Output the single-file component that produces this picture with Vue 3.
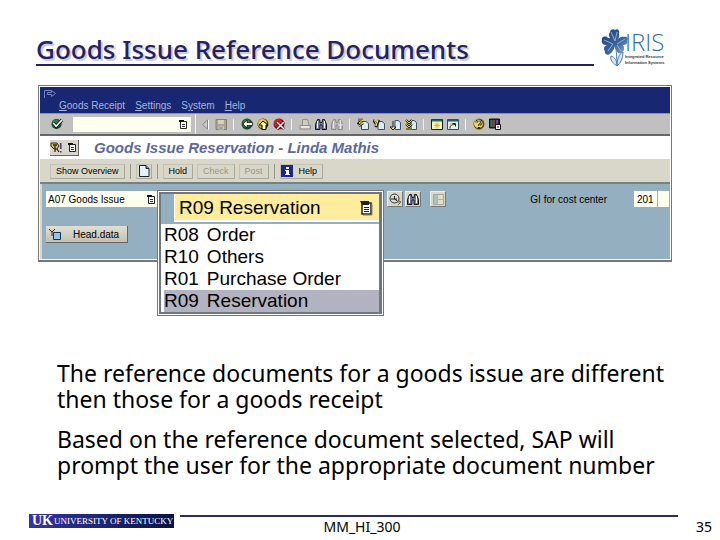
<script setup>
import { ref } from 'vue'

const command = ref('')
const action = ref('A07 Goods Issue')
const movement = ref('201')
const selected = ref('R09')
const options = [
  { code: 'R08', name: 'Order' },
  { code: 'R10', name: 'Others' },
  { code: 'R01', name: 'Purchase Order' },
  { code: 'R09', name: 'Reservation' },
]
const menus = [
  ['', 'G', 'oods Receipt'],
  ['', 'S', 'ettings'],
  ['S', 'y', 'stem'],
  ['', 'H', 'elp'],
]
const toolGroups = [
  ['previous', 'save'],
  ['back', 'exit', 'cancel'],
  ['print', 'find', 'findnext'],
  ['first', 'pageup', 'pagedown', 'last'],
  ['session', 'shortcut'],
  ['question', 'layout'],
]
const icons = {
  check: '<circle cx="6" cy="6.5" r="5.500" fill="#174b2b"/><circle cx="5.5" cy="6" r="4" fill="#2e8050"/><path d="M2.5 5.5l3 3.5L12 2" fill="none" stroke="#000" stroke-width="3.4"/><path d="M2.5 5.5l3 3.5L12 2" fill="none" stroke="#fff" stroke-width="1.8"/>',
  previous: '<path d="M8.5 2L3.500 6.500L8.500 11Z" fill="#ccc" stroke="#858585"/><path d="M9.500 2v9.500" stroke="#fff"/>',
  save: '<path d="M1 1.500h10.500v10H1Z" fill="#aaa492" stroke="#85806f"/><path d="M3 2h6v4H3ZM3.500 8.500h5.500v3H3.500Z" fill="#d6d1bd"/><path d="M4 10h4" stroke="#777"/>',
  back: '<circle cx="6" cy="6" r="5.500" fill="#164628"/><circle cx="5.500" cy="5.500" r="4" fill="#397b38"/><path d="M2 6l4-4v2.500h5.500v3H6V10Z" fill="#fff" stroke="#000" stroke-width=".7"/>',
  exit: '<circle cx="6" cy="6" r="5.500" fill="#594000"/><circle cx="5.500" cy="5.500" r="4.500" fill="#f0c42b"/><path d="M2 7l4-4 5 4H9v4.500H5V7Z" fill="#fffbd0" stroke="#000"/>',
  cancel: '<circle cx="6" cy="6" r="5.500" fill="#7f1018"/><circle cx="5" cy="5" r="4" fill="#ce2028"/><path d="M4 4l7 7M11 4l-7 7" stroke="#300" stroke-width="2.500"/><path d="M4 4l7 7M11 4l-7 7" stroke="#fff" stroke-width="1.500"/>',
  print: '<path d="M3.500 7V1.500H8.500L10 7M1 7.500h10.500V11H1Z" fill="#cfccc4" stroke="#918f88"/><path d="M2 9h8" stroke="#fff"/>',
  find: '<path d="M2.500 1.500h2l.5 3h2l.5-3h2l2 5V11.500H7V7H5v4.500H.500V6.500Z" fill="#74799a" stroke="#111425"/><path d="M2.500 3v7M9.500 3v7" stroke="#fff"/>',
  findnext: '<path d="M2.500 1.500h2l.5 3h2l.5-3h2l2 5V11.500H7V7H5v4.500H.500V6.500Z" fill="#bbb" stroke="#8c8c8c"/><path d="M2.500 3v7M9.500 2v9M7 7h5" stroke="#e4e4e4"/>',
  first: '<path d="M4.500 3.500H9l2.500 2v6h-7Z" fill="#dceaf2" stroke="#3c5364"/><path d="M1 2h5M6 2L2 5h4M6 5L2 8" stroke="#222" stroke-width="2.500" fill="none"/><path d="M1 2h5L2 5h4L2 8" stroke="#f3dc45" fill="none"/>',
  pageup: '<path d="M5 3.500h4l2.500 2v6H5Z" fill="#dceaf2" stroke="#3c5364"/><path d="M0 2l3 4v3l3-7" stroke="#222" stroke-width="2.500" fill="none"/><path d="M1 2l2 3v3l2-6" stroke="#f3dc45" fill="none"/>',
  pagedown: '<path d="M6 2.500h3l2.500 2v7H6Z" fill="#dceaf2" stroke="#3c5364"/><path d="M4 3v6H1l3 3 3-3H5" stroke="#222" fill="#f3dc45"/>',
  last: '<path d="M6 2.500h3l2.500 2v7H6Z" fill="#dceaf2" stroke="#3c5364"/><path d="M1 2l3 3 3-3M1 6l3 3 3-3M1 11h6" stroke="#222" stroke-width="2.200" fill="none"/><path d="M1 2l3 3 3-3M1 6l3 3 3-3M1 11h6" stroke="#f3dc45" stroke-width=".9" fill="none"/>',
  session: '<path d="M.500 1.500h11v10H.500Z" fill="#f7f4bd" stroke="#101b28"/><path d="M1 2.500h10" stroke="#22677b" stroke-width="2"/><path d="M6 4.500v6M3 7.500h6M4 5.500l4 4M8 5.500l-4 4" stroke="#d3bd23"/>',
  shortcut: '<path d="M.500 1.500h11v10H.500Z" fill="#e3eff0" stroke="#335063"/><path d="M1 2.500h10" stroke="#235a72" stroke-width="2"/><path d="M3 10.500c0-3 1-4 5-4M5.500 5.500h3v3" stroke="#222" fill="none"/><path d="M3 6h2" stroke="#e2c634" stroke-width="2"/>',
  question: '<circle cx="6" cy="6" r="5.500" fill="#65500a"/><circle cx="5.500" cy="5.500" r="4.500" fill="#efd34a"/><path d="M3.500 4.500c0-3 5-3 5 0 0 2-2.500 1.500-2.500 3.500M6 9v1.500" stroke="#111" stroke-width="2.200" fill="none"/><path d="M3.500 4.500c0-3 5-3 5 0 0 2-2.500 1.500-2.500 3.500" stroke="#fff" stroke-width=".8" fill="none"/>',
  layout: '<path d="M.500 1h10v9H.500Z" fill="#242044" stroke="#111"/><path d="M1.500 2h2v7h-2z" fill="#28864c"/><path d="M4 2h2v7H4z" fill="#a8342e"/><path d="M7 2h2v4H7z" fill="#4c52a5"/><path d="M6.500 6.500h5v5h-5Z" fill="#fff" stroke="#111"/><path d="M8 9h2" stroke="#111"/>',
  list: '<path d="M3.500 3.500h6v7h-6Z" fill="#fff" stroke="#222"/><path d="M2 2h5v2H2z" fill="#111"/><path d="M5 6.500h3M5 8.500h3" stroke="#333"/>',
  page: '<path d="M1.500.500H8L11 3.500v8H1.500Z" fill="#e3f2fa" stroke="#17252d"/><path d="M8 .500v3h3" fill="#75909c" stroke="#17252d"/>',
  info: '<path d="M0 0h12v12H0Z" fill="#1c2594"/><path d="M5 2h3v2H5zM4 5h4v4h1v1H4V9h1V6H4z" fill="#fff"/>',
  services: '<path d="M1 2h6l2 3-2 3H4L1 5Z" fill="#d5c35a" stroke="#29291d"/><path d="M3 4h4M5 5v6M7 8l2 3" stroke="#222" stroke-width="1.300"/><path d="M10 2h1.500v6H10zM10 10h1.500v1.500H10z" fill="#34407c"/>',
  clock: '<circle cx="5.500" cy="5.500" r="4.500" fill="#dedccc" stroke="#333"/><path d="M2 6h6M5.500 3v3l3 2" stroke="#222" fill="none"/><path d="M8 9h3M9 7l3 2-3 3" stroke="#50723f" fill="none"/>',
  panel: '<path d="M1.500 1.500h10v10h-10Z" fill="#e1ded0" stroke="#aaa799"/><path d="M2 2h3v9H2z" fill="#a8c2bc"/><path d="M5.500 2v9M5.500 6.500h6" stroke="#b6b1a2"/>',
  header: '<path d="M4.500 4.500h7v7h-7Z" fill="#8ec6ec" stroke="#14344f"/><path d="M0 1l3 3 3-3M3 4v4" stroke="#222" fill="none"/><path d="M2 2h2" stroke="#e8d96a"/>',
}
</script>

<template>
  <main class="slide">
    <header class="slide-header">
      <h1>Goods Issue Reference Documents</h1>
      <div class="iris">
        <svg class="flower" viewBox="0 0 28 40" aria-hidden="true">
          <defs>
            <linearGradient id="petal" x1="0" y1="0" x2="1" y2="1">
              <stop offset="0" stop-color="#173f7c" /><stop offset=".6" stop-color="#3c659d" /><stop offset="1" stop-color="#92b5d7" />
            </linearGradient>
          </defs>
          <path d="M13 14C8 11 7 6 9 4c0-2 3-4 5-2 3-2 5 1 4 4 1 2-1 6-3 8 2-4 5-6 8-5 3-1 5 2 3 4 1 3-1 4-4 4 2 3 1 6-1 7-1 3-5 1-5-1-2-1-2-3-2-5-1 4-3 6-5 8-2 2-6 0-5-3-2-2-1-5 2-6-4 0-6-2-5-5-1-3 4-5 6-2 3 0 5 2 6 4Z" fill="url(#petal)" />
          <path d="M10 4l4 9 2-9M3 12l9 4-5 7M16 16l8-5M16 17l4 6" fill="none" stroke="#a9c2de" stroke-width=".8" />
          <path d="M15 17c0 7 1 13 1 19M16 38c-5-3-7-7-6-10 4 1 6 5 6 10 0-7 2-12 6-14 0 6-2 11-6 14" fill="#dae6f3" stroke="#547caf" stroke-width="1" />
        </svg>
        <div class="iris-copy"><strong>IRIS</strong><span>Integrated Resource</span><span>Information Systems</span></div>
      </div>
    </header>

    <section class="screen">
      <div class="sap">
        <nav class="menubar">
          <svg class="exit-mark" viewBox="0 0 12 8" aria-hidden="true"><path d="M.500 8V.500H7M3.500 2.500h4v-2l4 3-4 3v-2h-4Z" fill="none" stroke="#7385c4" /></svg>
          <div class="menus"><a v-for="m in menus" :key="m[2]" href="#">{{ m[0] }}<u>{{ m[1] }}</u>{{ m[2] }}</a></div>
        </nav>
        <div class="toolbar">
          <button class="tool enter" aria-label="Enter"><svg viewBox="0 0 13 13" v-html="icons.check" /></button>
          <label class="command"><input v-model="command" aria-label="Command"><svg class="icon" viewBox="0 0 12 12" v-html="icons.list" /></label>
          <div v-for="(group, i) in toolGroups" :key="i" class="group">
            <button v-for="name in group" :key="name" class="tool" :aria-label="name"><svg viewBox="0 0 12 12" v-html="icons[name]" /></button>
          </div>
        </div>
        <div class="titlebar">
          <button class="services" aria-label="Services"><svg class="icon" viewBox="0 0 12 12" v-html="icons.services" /><svg class="icon" viewBox="0 0 12 12" v-html="icons.list" /></button>
          <h2>Goods Issue Reservation - Linda Mathis</h2>
        </div>
        <div class="actions">
          <button>Show Overview</button>
          <i></i>
          <button class="new" aria-label="New"><svg class="icon" viewBox="0 0 12 12" v-html="icons.page" /></button>
          <i></i>
          <button>Hold</button>
          <button disabled>Check</button>
          <button disabled>Post</button>
          <i></i>
          <button class="help"><svg class="icon" viewBox="0 0 12 12" v-html="icons.info" />Help</button>
        </div>
        <div class="work">
          <div class="fields">
            <label class="action-field"><input v-model="action" aria-label="Action"><svg class="icon" viewBox="0 0 12 12" v-html="icons.list" /></label>
            <div class="small-buttons">
              <button aria-label="Execute"><svg viewBox="0 0 12 12" v-html="icons.clock" /></button>
              <button aria-label="Find"><svg viewBox="0 0 12 12" v-html="icons.find" /></button>
              <button class="apart" aria-label="Overview"><svg viewBox="0 0 12 12" v-html="icons.panel" /></button>
            </div>
            <div class="movement"><label for="movement">GI for cost center</label><input id="movement" v-model="movement"><input class="stock" aria-label="Special stock"></div>
          </div>
          <button class="head-data"><svg class="icon" viewBox="0 0 12 12" v-html="icons.header" /><span>Head.data</span></button>
        </div>
      </div>

      <div class="popup">
        <div class="popup-inner">
          <button class="current"><span>R09 Reservation</span><svg viewBox="0 0 14 16" aria-hidden="true"><path d="M3 3h9v11H3Z" fill="#fff" stroke="#222" stroke-width="1.500" /><path d="M1 1h9v4H3Z" fill="#222" /><path d="M5 7.500h5M5 9.500h5M5 11.500h5" stroke="#222" /><path d="M13 4v11H4" fill="none" stroke="#858058" /></svg></button>
          <div class="options" role="listbox" aria-label="Reference document">
            <button v-for="o in options" :key="o.code" role="option" :aria-selected="selected === o.code" :class="{ chosen: selected === o.code }" @click="selected = o.code"><span>{{ o.code }}</span><span>{{ o.name }}</span></button>
          </div>
        </div>
      </div>
    </section>

    <section class="notes">
      <p>The reference documents for a goods issue are different then those for a goods receipt</p>
      <p>Based on the reference document selected, SAP will prompt the user for the appropriate document number</p>
    </section>

    <footer>
      <div class="brand-row">
        <div class="uk"><strong>UK</strong><span>UNIVERSITY OF KENTUCKY</span></div>
        <div class="foot-rule"></div>
      </div>
      <div class="foot-text"><span></span><span class="course">MM_HI_300</span><span class="number">35</span></div>
    </footer>
  </main>
</template>

<style>
body { margin: 0; background: #fff; }
</style>

<style scoped>
* { box-sizing: border-box; }
button, input { font: inherit; color: inherit; margin: 0; padding: 0; border: 0; border-radius: 0; background: none; min-width: 0; }
svg { display: block; }
.slide { min-height: 100vh; display: flex; flex-direction: column; font-family: "Noto Sans", sans-serif; color: #000; }
.slide-header { display: flex; gap: 7px; padding: 28px 50px 0 36px; height: 72px; }
h1 { flex: 1; height: 38px; margin: 0; border-bottom: 2px solid #24235f; color: #24235f; font-size: 26px; line-height: 42px; font-weight: 500; white-space: nowrap; text-shadow: 2px 2px 1px #c8c8d8; }
.iris { display: flex; width: 69px; }
.flower { width: 28px; height: 40px; flex: none; margin-right: -4px; }
.iris-copy { padding-top: 2px; white-space: nowrap; }
.iris-copy strong { display: block; font: 300 24px/24px "Open Sans", sans-serif; color: #2f6c9e; }
.iris-copy span { display: block; font: bold 4px/6px "Liberation Sans", sans-serif; color: #263c50; }

.screen { position: relative; margin: 13px 48px 0 38px; font-family: "Liberation Sans", sans-serif; font-size: 10px; }
.sap { border: 1px solid #777; border-bottom: 2px solid #777; padding: 1px; }
.menubar { height: 27px; background: #172772; border-bottom: 1px solid #8e94a5; padding: 3px 0 0 4px; color: #a9b4dd; }
.exit-mark { width: 12px; height: 8px; }
.menus { display: flex; gap: 10px; padding-left: 15px; line-height: 16px; }
.menus a { color: inherit; text-decoration: none; }
.toolbar { height: 22px; background: #c0c0c0; border-bottom: 2px solid #666; display: flex; align-items: center; }
.tool, .tool svg { width: 12px; height: 12px; }
.tool { flex: none; }
.enter { margin: 0 10px 0 11px; }
.command { display: flex; align-items: center; width: 118px; height: 15px; background: #fffff0; padding-right: 2px; }
.command input { flex: 1; height: 15px; }
.icon { width: 12px; height: 12px; flex: none; }
.group { display: flex; align-items: center; gap: 4px; padding: 0 6px 0 7px; border-left: 1px solid #f0f0f0; height: 11px; }
.command + .group { margin-left: 4px; height: 20px; padding-left: 3px; }
.titlebar { height: 24px; display: flex; align-items: center; gap: 15px; padding: 0 10px; border-bottom: 1px solid #d8d6c8; }
.services { display: flex; align-items: center; gap: 4px; width: 29px; height: 16px; background: #d8d6c8; border-right: 1px solid #666; border-bottom: 1px solid #666; }
h2 { margin: 0; color: #5b6a9b; font-size: 15px; line-height: 18px; font-style: italic; font-weight: 700; }
.actions { height: 24px; display: flex; align-items: center; gap: 4px; padding-left: 10px; background: #d9d7c8; border-bottom: 2px solid #77827e; font-size: 9px; }
.actions button { height: 15px; padding: 0 5px; border: 1px solid #c3c1b3; border-right-color: #aaa899; border-bottom-color: #aaa899; line-height: 13px; }
.actions button:disabled { color: #96958a; }
.actions i { width: 1px; height: 15px; margin: 0 1px; background: #96958a; }
.actions .new { padding: 0 1px; }
.actions .help { display: flex; align-items: center; gap: 6px; padding-left: 0; }
.work { height: 75px; background: #94b0c0; border-left: 2px solid #d9d7c8; padding: 7px 1px 0 4px; }
.fields { display: flex; align-items: center; }
.action-field { display: flex; align-items: center; width: 112px; height: 16px; background: #fffff0; padding: 0 1px 0 2px; }
.action-field input { flex: 1; }
.small-buttons { display: flex; gap: 2px; padding-left: 229px; }
.small-buttons button { width: 16px; height: 16px; padding: 1px; background: #d9d7c8; border: 1px solid #eee; border-right-color: #777; border-bottom-color: #777; }
.small-buttons svg { width: 12px; height: 12px; }
.small-buttons .apart { margin-left: 7px; }
.movement { display: flex; align-items: center; gap: 1px; margin-left: auto; white-space: nowrap; }
.movement label { margin-right: 26px; }
.movement input { width: 23px; height: 16px; background: #fffff0; padding-left: 3px; }
.movement .stock { width: 11px; }
.head-data { display: flex; align-items: center; gap: 12px; width: 82px; height: 17px; margin-top: 19px; padding-left: 3px; background: linear-gradient(#e2e0d3, #c3c1b3); border-right: 1px solid #666; border-bottom: 1px solid #666; }

.popup { position: absolute; left: 119px; top: 105px; width: 227px; background: #fff; border: 1px solid #777; padding: 1px; font-size: 19px; }
.popup-inner { border: 2px solid #6f797d; border-right-width: 3px; background: #fff; }
.current { display: flex; align-items: center; justify-content: space-between; width: 100%; height: 30px; padding: 0 6px 0 5px; background: #ffec9c; border-left: 13px solid #94b0c0; border-bottom: 2px solid #94b0c0; box-shadow: inset 1px 0 #fff, inset 0 -2px #fff; }
.current svg { width: 14px; height: 16px; }
.options { padding-left: 3px; }
.options button { display: flex; gap: 8px; width: 100%; height: 22px; line-height: 22px; text-align: left; }
.options .chosen { background: #b2b2c0; }

.notes { padding: 98px 50px 0 57px; font-size: 23px; line-height: 26px; }
.notes p { margin: 0 0 14px; }
footer { margin-top: auto; padding-bottom: 4px; }
.brand-row { display: flex; gap: 6px; padding: 0 42px 0 29px; }
.uk { width: 145px; height: 14px; display: flex; align-items: center; gap: 1px; padding-left: 3px; background: linear-gradient(90deg, #3434a4, #071342); color: #fff; font-family: "Liberation Serif", serif; white-space: nowrap; }
.uk strong { font-size: 14px; line-height: 14px; }
.uk span { font-size: 9px; line-height: 14px; }
.foot-rule { flex: 1; height: 2px; margin-top: 1px; background: #2b2b65; }
.foot-text { display: grid; grid-template-columns: 1fr auto 1fr; margin-top: -10px; padding: 0 8px 0 12px; font-size: 14px; line-height: 18px; }
.number { text-align: right; }
</style>
